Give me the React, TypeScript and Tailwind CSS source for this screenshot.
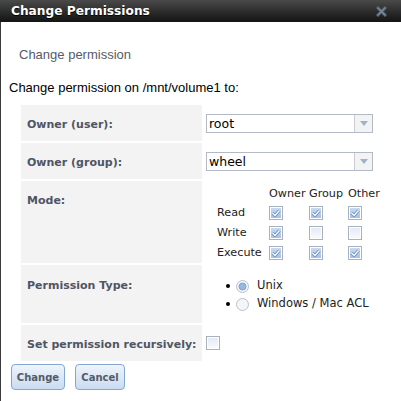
import React from "react";

const font = { fontFamily: '"DejaVu Sans", Verdana, sans-serif' };
const arial = { fontFamily: '"Liberation Sans", Arial, sans-serif' };

function Check({ checked }: { checked: boolean }) {
  return (
    <svg width="14" height="14" viewBox="0 0 14 14" className="block">
      <defs>
        <linearGradient id={checked ? "gc" : "gu"} x1="0" y1="0" x2="0" y2="1">
          {checked ? (
            <>
              <stop offset="0" stopColor="#c9dbf0" />
              <stop offset="1" stopColor="#a7c2e4" />
            </>
          ) : (
            <>
              <stop offset="0" stopColor="#e4ebf5" />
              <stop offset="1" stopColor="#f7f9fc" />
            </>
          )}
        </linearGradient>
      </defs>
      <rect x="0.5" y="0.5" width="13" height="13" fill="#fff" stroke="#a9b1bf" />
      <rect x="2" y="2" width="10" height="10" fill={`url(#${checked ? "gc" : "gu"})`} />
      {checked && (
        <>
          <path d="M3.5 7 L6 9.5 L10.5 4.5" fill="none" stroke="#5d88bf" strokeWidth="3" strokeLinejoin="round" />
          <path d="M3.5 7 L6 9.5 L10.5 4.5" fill="none" stroke="#ffffff" strokeWidth="1.4" />
        </>
      )}
    </svg>
  );
}

function Radio({ checked }: { checked: boolean }) {
  return (
    <svg width="13" height="13" viewBox="0 0 13 13" className="block">
      <circle cx="6.5" cy="6.5" r="6" fill="#f3f5f8" stroke="#b9c0ca" />
      {checked && <circle cx="6.5" cy="6.5" r="3.5" fill="#97b9df" stroke="#6f98c8" strokeWidth="0.8" />}
    </svg>
  );
}

function Select({ value }: { value: string }) {
  return (
    <div className="flex h-[19px] w-[167px] border border-[#b3b9c6] bg-white">
      <div className="flex-1 pl-[2px] text-[12.5px] leading-[17px] text-black" style={font}>
        {value}
      </div>
      <div className="flex w-[18px] items-center justify-center border-l border-[#c6cbd4] bg-[#f3f3f3]">
        <svg width="8" height="5" viewBox="0 0 8 5">
          <path d="M0 0 L8 0 L4 5 Z" fill="#9eb2cf" />
        </svg>
      </div>
    </div>
  );
}

const labelCls = "w-[181px] bg-[#f3f3f3] pl-[6px] align-top text-[11px] font-bold text-[#4f5563]";

export default function App() {
  const perms = [
    ["Read", true, true, true],
    ["Write", true, false, false],
    ["Execute", true, true, true],
  ] as const;
  return (
    <div className="h-[401px] w-[401px] overflow-hidden bg-white">
      <div
        className="flex h-[22px] items-center justify-between bg-gradient-to-b from-[#4a4a4a] to-[#141414] pl-[11px] pr-[14px]"
        style={font}
      >
        <span className="text-[12.2px] font-bold text-white [text-shadow:0_1px_1px_#000]">Change Permissions</span>
        <svg width="11" height="11" viewBox="0 0 11 11">
          <path d="M2 2 L9 9 M9 2 L2 9" stroke="#4d5762" strokeWidth="3.2" strokeLinecap="square" />
          <path d="M2 2 L9 9 M9 2 L2 9" stroke="#7e8b9b" strokeWidth="1.4" strokeLinecap="square" />
        </svg>
      </div>
      <div className="h-[379px] border-l border-[#3a3a3a]">
        <div className="pl-[18px] pt-[25px] text-[13px] leading-[16px] text-[#555b69]" style={arial}>
          Change permission
        </div>
        <div className="pl-[8px] pt-[17px] text-[13px] leading-[16px] text-black" style={arial}>
          Change permission on /mnt/volume1 to:
        </div>
        <table className="ml-[18px] mt-[7px] border-separate border-spacing-[2px]" style={font}>
          <tbody>
            <tr className="h-[36px]">
              <td className={labelCls + " pt-[12px]"}>Owner (user):</td>
              <td className="pl-[2px] align-middle">
                <Select value="root" />
              </td>
            </tr>
            <tr className="h-[36px]">
              <td className={labelCls + " pt-[12px]"}>Owner (group):</td>
              <td className="pl-[2px] align-middle">
                <Select value="wheel" />
              </td>
            </tr>
            <tr className="h-[81px]">
              <td className={labelCls + " pt-[12px]"}>Mode:</td>
              <td className="pl-[13px] pt-[4px] align-top">
                <div className="grid grid-cols-[52px_40px_39px_33px] text-[11.2px] leading-[18px] text-[#222]">
                  <div />
                  <div>Owner</div>
                  <div>Group</div>
                  <div>Other</div>
                  {perms.map(([name, a, b, c]) => (
                    <React.Fragment key={name}>
                      <div className="h-[20px] leading-[20px]">{name}</div>
                      <div className="flex h-[20px] items-center">
                        <Check checked={a} />
                      </div>
                      <div className="flex h-[20px] items-center">
                        <Check checked={b} />
                      </div>
                      <div className="flex h-[20px] items-center">
                        <Check checked={c} />
                      </div>
                    </React.Fragment>
                  ))}
                </div>
              </td>
            </tr>
            <tr className="h-[58px]">
              <td className={labelCls + " pt-[13px]"}>Permission Type:</td>
              <td className="pl-[22px] pt-[12px] align-top text-[11.5px] text-[#222]">
                <div className="flex h-[18px] items-center">
                  <span className="h-[4px] w-[4px] rounded-full bg-black" />
                  <span className="ml-[6px]">
                    <Radio checked={true} />
                  </span>
                  <span className="ml-[8px]">Unix</span>
                </div>
                <div className="flex h-[18px] items-center">
                  <span className="h-[4px] w-[4px] rounded-full bg-black" />
                  <span className="ml-[6px]">
                    <Radio checked={false} />
                  </span>
                  <span className="ml-[8px]">Windows / Mac ACL</span>
                </div>
              </td>
            </tr>
            <tr className="h-[36px]">
              <td className={labelCls + " pt-[12px]"}>Set permission recursively:</td>
              <td className="pl-[2px] align-middle">
                <Check checked={false} />
              </td>
            </tr>
          </tbody>
        </table>
        <div className="ml-[10px] mt-[1px] flex gap-[10px]" style={font}>
          <button className="h-[26px] w-[54px] rounded-[4px] border border-[#86a6cf] bg-gradient-to-b from-[#eef4fb] to-[#c9dcf2] text-[10px] font-bold text-[#555b66]">
            Change
          </button>
          <button className="h-[26px] w-[50px] rounded-[4px] border border-[#86a6cf] bg-gradient-to-b from-[#eef4fb] to-[#c9dcf2] text-[10px] font-bold text-[#555b66]">
            Cancel
          </button>
        </div>
      </div>
    </div>
  );
}
